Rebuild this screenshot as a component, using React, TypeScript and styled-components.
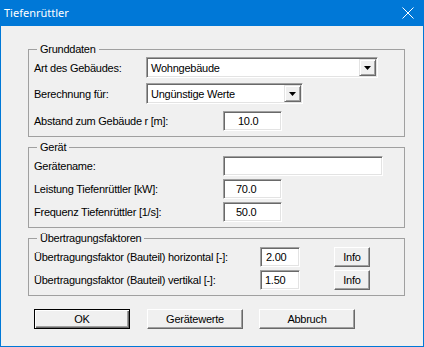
import React from "react";
import styled, { createGlobalStyle } from "styled-components";

const Global = createGlobalStyle`
  html, body { margin: 0; padding: 0; background: #ffffff; }
  body { width: 424px; height: 347px; overflow: hidden; }
`;

const Window = styled.div`
  width: 424px;
  height: 347px;
  box-sizing: border-box;
  border: 1px solid #0078d7;
  border-top: none;
  background: #f0f0f0;
  display: flex;
  flex-direction: column;
  font-family: "Liberation Sans", Arial, sans-serif;
  font-size: 11px;
  letter-spacing: -0.25px;
  color: #000;
`;

const TitleBar = styled.div`
  height: 26px;
  flex: none;
  background: #0078d7;
  display: flex;
  align-items: center;
  padding: 0 9px 0 3px;
`;

const TitleText = styled.span`
  flex: 1;
  color: #ffffff;
  font-family: "Noto Sans", "Liberation Sans", sans-serif;
  font-size: 11px;
  letter-spacing: 0;
  line-height: 14px;
  margin-top: -1px;
`;

const CloseIcon = styled.svg`
  width: 12px;
  height: 12px;
  display: block;
  margin-top: 0px;
`;

const Body = styled.div`
  flex: 1;
  display: flex;
  flex-direction: column;
  padding: 17px 18px 0 27px;
`;

const Group = styled.fieldset<{ $pt: number; $mt: number }>`
  margin: ${(p) => p.$mt}px 0 0 0;
  padding: ${(p) => p.$pt}px 0 5px 5px;
  border: 1px solid #a0a0a0;
  min-width: 0;
  display: flex;
  flex-direction: column;
`;

const Legend = styled.legend`
  margin-left: 3px;
  padding: 0 3px;
  height: 13px;
  line-height: 13px;
  font-size: 11px;
`;

const Row = styled.div<{ $h: number; $mt?: number }>`
  display: flex;
  align-items: center;
  height: ${(p) => p.$h}px;
  margin-top: ${(p) => p.$mt ?? 0}px;
`;

const Label = styled.span<{ $w: number }>`
  flex: none;
  width: ${(p) => p.$w}px;
  white-space: nowrap;
`;

const Sunken = `
  box-sizing: border-box;
  background: #ffffff;
  border-style: solid;
  border-width: 1px;
  border-color: #a0a0a0 #ffffff #ffffff #a0a0a0;
  box-shadow: inset 1px 1px 0 #696969, inset -1px -1px 0 #e3e3e3;
`;

const Combo = styled.div<{ $w: number }>`
  ${Sunken}
  width: ${(p) => p.$w}px;
  height: 21px;
  flex: none;
  display: flex;
  align-items: center;
  padding: 1px;
`;

const ComboText = styled.span`
  flex: 1;
  padding-left: 3px;
  white-space: nowrap;
`;

const DropButton = styled.div`
  width: 17px;
  height: 17px;
  box-sizing: border-box;
  flex: none;
  background: #f0f0f0;
  border: 1px solid;
  border-color: #e3e3e3 #696969 #696969 #e3e3e3;
  box-shadow: inset 1px 1px 0 #ffffff, inset -1px -1px 0 #a0a0a0;
  display: flex;
  align-items: center;
  justify-content: center;
`;

const Field = styled.input<{ $w: number; $pl: number }>`
  ${Sunken}
  width: ${(p) => p.$w}px;
  height: 20px;
  flex: none;
  margin: 0;
  padding: 0 0 0 ${(p) => p.$pl}px;
  font-family: "Liberation Sans", Arial, sans-serif;
  font-size: 11px;
  letter-spacing: -0.25px;
  color: #000;
  outline: none;
`;

const Button = styled.button<{ $w: number; $default?: boolean; $ml?: number }>`
  width: ${(p) => p.$w}px;
  height: 20px;
  flex: none;
  margin: 0 0 0 ${(p) => p.$ml ?? 0}px;
  padding: 0;
  box-sizing: border-box;
  background: #f0f0f0;
  font-family: "Liberation Sans", Arial, sans-serif;
  font-size: 11px;
  letter-spacing: -0.25px;
  color: #000;
  border: 1px solid;
  border-color: ${(p) =>
    p.$default ? "#000000" : "#ffffff #696969 #696969 #ffffff"};
  box-shadow: ${(p) =>
    p.$default
      ? "inset 1px 1px 0 #ffffff, inset -1px -1px 0 #696969, inset -2px -2px 0 #a0a0a0"
      : "inset -1px -1px 0 #a0a0a0"};
`;

const ButtonRow = styled.div`
  display: flex;
  margin: 13px 0 0 6px;
`;

const Arrow = () => (
  <svg width="7" height="4" viewBox="0 0 7 4">
    <polygon points="0,0 7,0 3.5,4" fill="#000" />
  </svg>
);

export default function App() {
  return (
    <>
      <Global />
      <Window>
        <TitleBar>
          <TitleText>Tiefenrüttler</TitleText>
          <CloseIcon viewBox="0 0 12 12">
            <path d="M0.5 0.5 L11.5 11.5 M11.5 0.5 L0.5 11.5" stroke="#ffffff" strokeWidth="1" fill="none" />
          </CloseIcon>
        </TitleBar>
        <Body>
          <Group $pt={1} $mt={0}>
            <Legend>Grunddaten</Legend>
            <Row $h={21}>
              <Label $w={112}>Art des Gebäudes:</Label>
              <Combo $w={232}>
                <ComboText>Wohngebäude</ComboText>
                <DropButton><Arrow /></DropButton>
              </Combo>
            </Row>
            <Row $h={21} $mt={5}>
              <Label $w={112}>Berechnung für:</Label>
              <Combo $w={157}>
                <ComboText>Ungünstige Werte</ComboText>
                <DropButton><Arrow /></DropButton>
              </Combo>
            </Row>
            <Row $h={20} $mt={7}>
              <Label $w={189}>Abstand zum Gebäude r [m]:</Label>
              <Field $w={59} $pl={14} readOnly value="10.0" />
            </Row>
          </Group>

          <Group $pt={2} $mt={4}>
            <Legend>Gerät</Legend>
            <Row $h={20}>
              <Label $w={189}>Gerätename:</Label>
              <Field $w={160} $pl={4} readOnly value="" />
            </Row>
            <Row $h={20} $mt={3}>
              <Label $w={189}>Leistung Tiefenrüttler [kW]:</Label>
              <Field $w={59} $pl={12} readOnly value="70.0" />
            </Row>
            <Row $h={20} $mt={3}>
              <Label $w={189}>Frequenz Tiefenrüttler [1/s]:</Label>
              <Field $w={59} $pl={12} readOnly value="50.0" />
            </Row>
          </Group>

          <Group $pt={2} $mt={4}>
            <Legend>Übertragungsfaktoren</Legend>
            <Row $h={20}>
              <Label $w={226}>Übertragungsfaktor (Bauteil) horizontal [-]:</Label>
              <Field $w={40} $pl={5} readOnly value="2.00" />
              <Button $w={36} $ml={34}>Info</Button>
            </Row>
            <Row $h={20} $mt={3}>
              <Label $w={226}>Übertragungsfaktor (Bauteil) vertikal [-]:</Label>
              <Field $w={40} $pl={4} readOnly value="1.50" />
              <Button $w={36} $ml={34}>Info</Button>
            </Row>
          </Group>

          <ButtonRow>
            <Button $w={96} $default>OK</Button>
            <Button $w={96} $ml={17}>Gerätewerte</Button>
            <Button $w={96} $ml={16}>Abbruch</Button>
          </ButtonRow>
        </Body>
      </Window>
    </>
  );
}
